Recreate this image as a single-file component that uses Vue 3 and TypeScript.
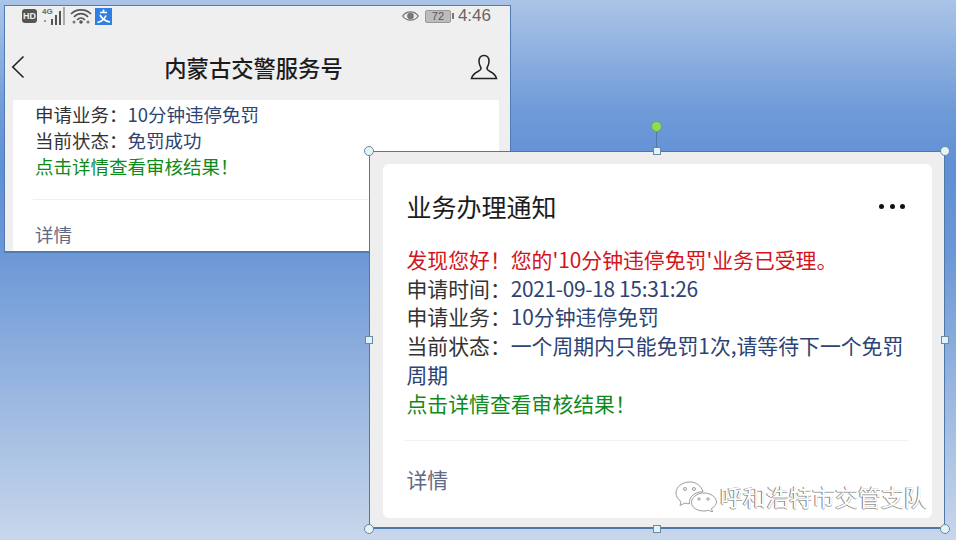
<template>
  <div class="desktop">
    <!-- phone screenshot at the back -->
    <section class="phone">
      <div class="status">
        <div class="status-left">
          <span class="hd">HD</span>
          <svg class="signal" width="26" height="20" viewBox="0 0 26 20">
            <text x="0" y="8" class="net">4G</text>
            <rect x="2" y="14" width="2" height="2" fill="#9a9a9a" />
            <rect x="9" y="13" width="2" height="6" fill="#555" />
            <rect x="13" y="9" width="2" height="10" fill="#555" />
            <rect x="17" y="5" width="2" height="14" fill="#555" />
            <rect x="21" y="1" width="2" height="18" fill="#aaa" />
          </svg>
          <svg class="wifi" width="22" height="18" viewBox="0 0 22 18" fill="none" stroke="#555" stroke-width="1.6">
            <path d="M1 7C6 1.500 16 1.500 21 7" />
            <path d="M4 10C8 5.500 14 5.500 18 10" />
            <path d="M7 13C9.500 10.500 12.500 10.500 15 13" />
            <circle cx="4" cy="15" r="1.500" fill="#777" stroke="none" />
            <circle cx="11" cy="15" r="1.800" fill="#555" stroke="none" />
            <circle cx="18" cy="15" r="1.500" fill="#777" stroke="none" />
          </svg>
          <span class="translate">
            <svg width="17" height="17" viewBox="0 0 17 17" fill="none" stroke="#fff" stroke-width="1.700">
              <path d="M5 4.500H12M8.500 1.500V4.500M11 7.500C9.500 11 6.500 13.500 2.500 14.500M5 7C7 11 10 13 15 14" />
            </svg>
          </span>
        </div>
        <div class="status-right">
          <svg width="17" height="12" viewBox="0 0 17 12">
            <path d="M.7 6C4.500.5 12.500.5 16.300 6 12.500 11.500 4.500 11.500.7 6Z" fill="none" stroke="#777" stroke-width="1.300" />
            <circle cx="8.500" cy="6" r="3.300" fill="#777" />
          </svg>
          <span class="battery">72</span>
          <span class="battery-tip"></span>
          <span class="clock">4:46</span>
        </div>
      </div>
      <header class="phone-nav">
        <svg class="back" width="14" height="24" viewBox="0 0 14 24" fill="none" stroke="#222" stroke-width="1.600">
          <path d="M12.500 1.500 1.800 12 12.500 22.500" />
        </svg>
        <h1>内蒙古交警服务号</h1>
        <svg width="28" height="26" viewBox="0 0 28 26" fill="none" stroke="#222" stroke-width="1.500">
          <path d="M14 1.500C10.500 1.500 9 4 9 7.500C9 10.500 10.500 12.500 11 14C11.300 15.500 10 16.500 8 17.500C5 19 2.500 20.500 1.500 24.500H26.500C25.500 20.500 23 19 20 17.500C18 16.500 16.700 15.500 17 14C17.500 12.500 19 10.500 19 7.500C19 4 17.500 1.500 14 1.500Z" />
        </svg>
      </header>
      <article class="phone-card">
        <p>申请业务：<span class="value">10分钟违停免罚</span></p>
        <p>当前状态：<span class="value">免罚成功</span></p>
        <p class="green">点击详情查看审核结果！</p>
        <hr />
        <a class="more">详情</a>
      </article>
    </section>

    <!-- selected picture on top, with its handles -->
    <section class="notice">
      <article class="notice-card">
        <div class="notice-head">
          <h2>业务办理通知</h2>
          <div class="dots"><i></i><i></i><i></i></div>
        </div>
        <p class="red">发现您好！您的'10分钟违停免罚'业务已受理。</p>
        <p>申请时间：<span class="value date">2021-09-18 15:31:26</span></p>
        <p>申请业务：<span class="value">10分钟违停免罚</span></p>
        <p>当前状态：<span class="value">一个周期内只能免罚1次,请等待下一个免罚周期</span></p>
        <p class="green">点击详情查看审核结果！</p>
        <hr />
        <a class="more">详情</a>
      </article>

      <span class="rotate-line"></span>
      <span class="rotate"></span>
      <span v-for="h in handles" :key="h" class="handle" :class="h"></span>

      <div class="watermark">
        <svg width="46" height="32" viewBox="0 0 46 32" fill="rgba(255,255,255,.25)" stroke="#9c9c9c" stroke-width="1">
          <path d="M16 2C8 2 2 7 2 13C2 16.500 4 19.500 7 21.500L6 25.500L11 23C12.500 23.500 14 23.700 15.500 23.700C14.500 17 21 11.500 29 11.800C27.500 6 22 2 16 2Z" />
          <path d="M30 13C23 13 17.500 17.500 17.500 22.500C17.500 27.500 23 31 30 31C31.500 31 33 30.800 34.500 30.300L38.500 32L37.500 28.500C40.500 26.500 42.500 24.500 42.500 22C42.500 17.500 37 13 30 13Z" />
          <circle cx="11" cy="9" r="1.500" />
          <circle cx="20" cy="9" r="1.500" />
          <circle cx="25" cy="19" r="1.200" />
          <circle cx="34" cy="19" r="1.200" />
        </svg>
        <span>呼和浩特市交管支队</span>
      </div>
    </section>
  </div>
</template>

<script setup lang="ts">
const handles = ['tl', 'tm', 'tr', 'ml', 'mr', 'bl', 'bm', 'br']
</script>

<style>
html,
body {
  margin: 0;
  overflow: hidden;
}
</style>

<style scoped>
.desktop {
  position: relative;
  width: 956px;
  height: 540px;
  overflow: hidden;
  background: linear-gradient(180deg, #abc4e7 0, #6f9bd8 110px, #5f8fd5 170px, #6b97d6 250px, #c8d7eb 540px);
  font-family: "Noto Sans CJK SC", "Noto Sans", sans-serif;
}

p,
h1,
h2,
hr {
  margin: 0;
}

.value {
  color: #2d4373;
}

.date {
  letter-spacing: -0.3px;
}

.green {
  color: #0f8a1c;
}

.red {
  color: #d3141c;
}

.more {
  color: #616a85;
}

/* back window */
.phone {
  position: absolute;
  left: 4px;
  top: 5px;
  box-sizing: border-box;
  width: 507px;
  height: 248px;
  display: flex;
  flex-direction: column;
  background: #efefef;
  border: 1px solid #4f7cb5;
  border-bottom-width: 2px;
}

.status {
  display: flex;
  justify-content: space-between;
  align-items: center;
  height: 20px;
  padding: 0 19px 0 17px;
}

.status-left,
.status-right {
  display: flex;
  align-items: center;
}

.hd {
  width: 15px;
  height: 14px;
  margin-right: 5px;
  border-radius: 3px;
  background: #555;
  color: #eee;
  font: 700 9px/14px "Liberation Sans", sans-serif;
  text-align: center;
}

.net {
  font: 700 8px "Liberation Sans", sans-serif;
  fill: #666;
}

.wifi {
  margin: 0 3px 0 2px;
}

.translate {
  display: flex;
  width: 17px;
  height: 17px;
  background: #2f7fe0;
}

.battery {
  width: 26px;
  height: 13px;
  margin-left: 6px;
  box-sizing: border-box;
  border: 1px solid #999;
  border-radius: 2px;
  background: #bcbcbc;
  color: #555;
  font: 11px/11px "Liberation Sans", sans-serif;
  text-align: center;
}

.battery-tip {
  width: 2px;
  height: 6px;
  margin: 0 4px 0 1px;
  background: #777;
}

.clock {
  color: #666;
  font: 17px "Liberation Sans", sans-serif;
}

.phone-nav {
  display: flex;
  justify-content: space-between;
  align-items: center;
  height: 74px;
  padding: 8px 12px 0 6px;
  box-sizing: border-box;
}

.phone-nav h1 {
  margin-left: 12px;
  font-size: 22.300px;
  font-weight: 500;
  color: #1c1c1c;
}

.phone-card {
  flex: 1;
  margin: 0 11px 0 8px;
  padding: 1px 22px 0 22px;
  background: #fff;
  font-size: 18.500px;
  line-height: 26px;
  color: #333;
}

.phone-card hr {
  margin: 20px 0 21px -2px;
  border: 0;
  border-top: 1px solid #f0f0f0;
}

.phone-card .more {
  display: block;
  line-height: 26px;
}

/* front window */
.notice {
  position: absolute;
  left: 369px;
  top: 151px;
  box-sizing: border-box;
  width: 576px;
  height: 378px;
  padding: 12px 12px 9px 13px;
  display: flex;
  background: #eeeeee;
  border: 1px solid #4f77a8;
  border-bottom-width: 2px;
}

.notice-card {
  flex: 1;
  padding: 0 23px 0 23.500px;
  background: #fff;
  border-radius: 6px;
  font-size: 20.850px;
  line-height: 28.700px;
  color: #333;
}

.notice-head {
  display: flex;
  justify-content: space-between;
  align-items: center;
  height: 81px;
  padding-top: 4px;
  box-sizing: border-box;
}

.notice-head h2 {
  font-size: 25px;
  font-weight: 400;
  color: #1c1c1c;
}

.dots {
  display: flex;
  gap: 5.500px;
  margin-right: 4px;
}

.dots i {
  width: 5px;
  height: 5px;
  border-radius: 50%;
  background: #111;
}

.notice-card hr {
  margin: 23px 0 24px -2px;
  border: 0;
  border-top: 1px solid #f1f1f1;
}

.notice-card .more {
  display: block;
}

.rotate-line {
  position: absolute;
  left: 286px;
  top: -27px;
  width: 1px;
  height: 26px;
  background: #4f77a8;
}

.rotate {
  position: absolute;
  left: 281px;
  top: -31px;
  box-sizing: border-box;
  width: 11px;
  height: 11px;
  border-radius: 50%;
  border: 1px solid #6fa24a;
  background: #8fdc52;
}

.handle {
  position: absolute;
  box-sizing: border-box;
  width: 8px;
  height: 8px;
  border: 1px solid #6a8aa0;
  background: #e2f1fb;
}

.tl,
.tr,
.bl,
.br {
  width: 10px;
  height: 10px;
  border-radius: 50%;
  background: #e6f2f8;
}

.tl { left: -6px; top: -6px; }
.tm { left: 282.500px; top: -5px; }
.tr { right: -6px; top: -6px; }
.ml { left: -5px; top: 184px; }
.mr { right: -5px; top: 184px; }
.bl { left: -6px; bottom: -7px; }
.bm { left: 282.500px; bottom: -6px; }
.br { right: -6px; bottom: -7px; }

.watermark {
  position: absolute;
  left: 304px;
  top: 328px;
  display: flex;
  align-items: center;
  gap: 0;
  color: #fff;
  font-size: 23px;
  line-height: 32px;
  text-shadow: -1px 0 0 #7c7c7c, 0 1px 0 #a8a8a8;
  white-space: nowrap;
}
</style>
